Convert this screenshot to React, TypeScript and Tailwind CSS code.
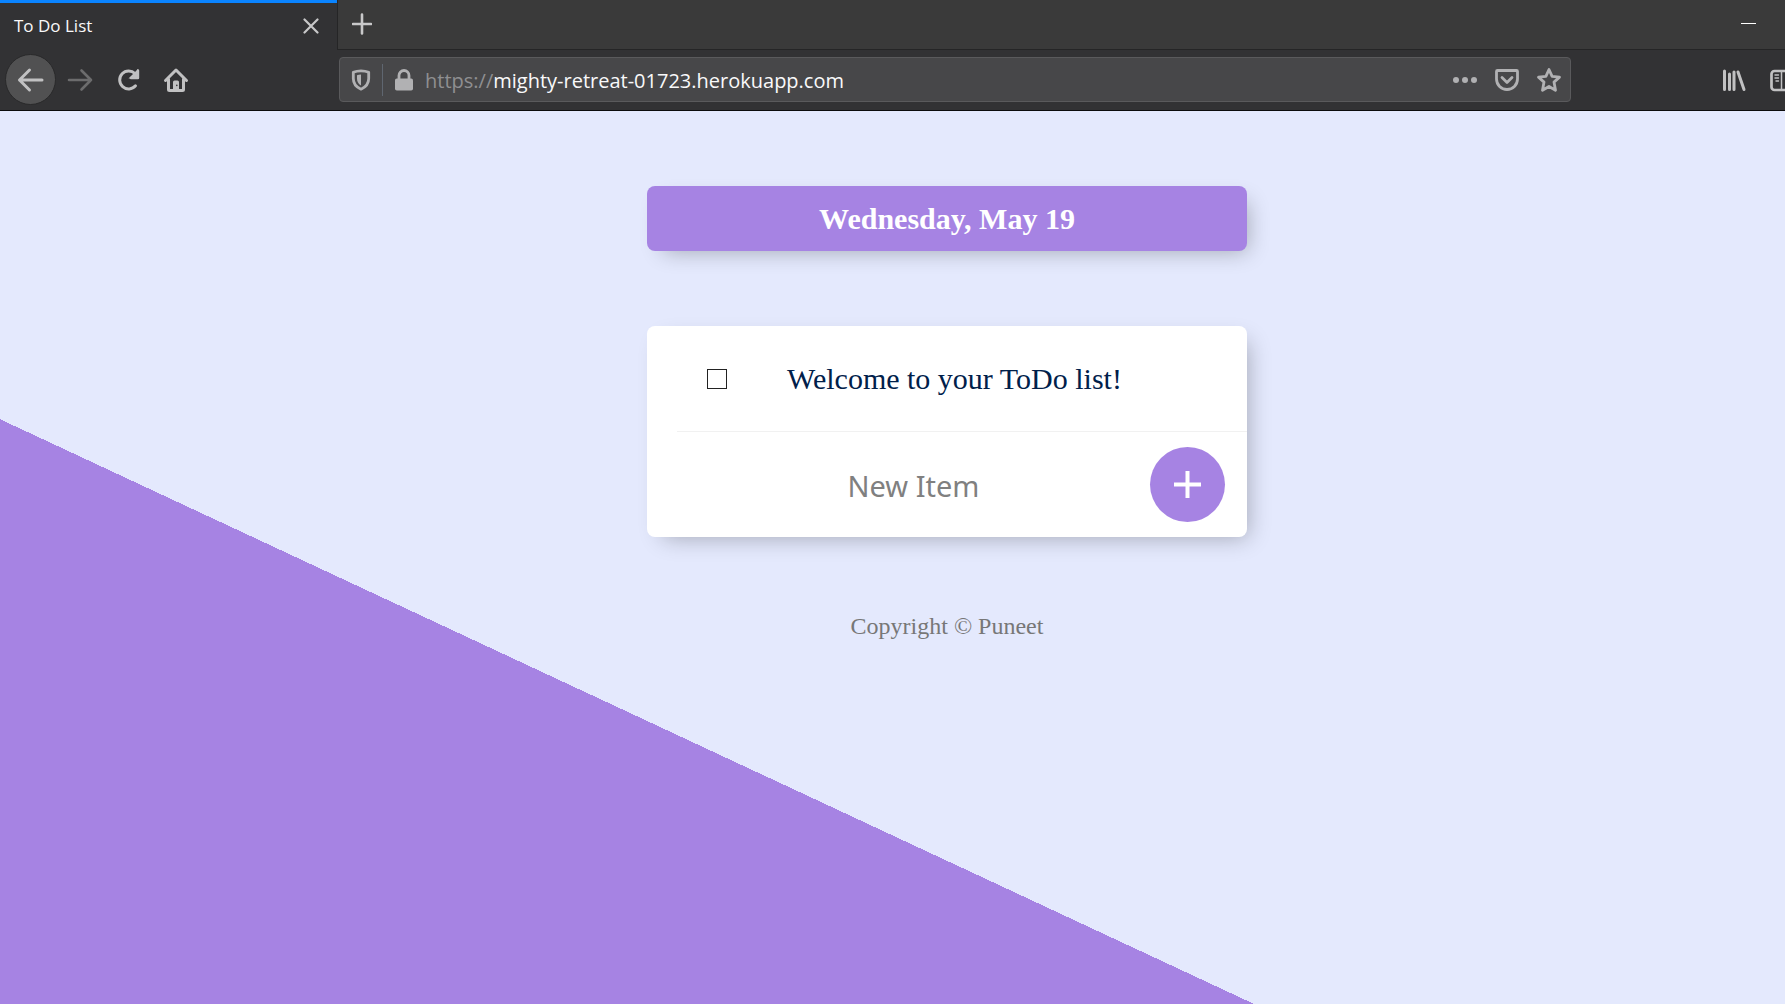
import React from "react";

function TabStrip() {
  return (
    <div className="flex h-[50px] items-stretch bg-[#3a3a3a]">
      <div className="flex w-[337px] shrink-0 items-center justify-between border-t-3 border-[#0a84ff] bg-[#323234] pr-3.5 pb-0.5 pl-3.5">
        <span className="text-[17px] leading-6 text-[#f9f9fa]">To Do List</span>
        <button aria-label="Close tab" className="flex size-6 items-center justify-center text-[#c8c8c9]">
          <svg width="16" height="16" viewBox="0 0 16 16" fill="none" stroke="currentColor" strokeWidth="2.2" strokeLinecap="round">
            <path d="M1.500 1.500l13 13M14.500 1.500l-13 13" />
          </svg>
        </button>
      </div>
      <div className="flex grow items-center justify-between border-b border-l border-[#252526] pr-[29px] pb-0.5 pl-3.5">
        <button aria-label="New tab" className="text-[#c8c8c9]">
          <svg width="20" height="22" viewBox="0 0 20 22" fill="none" stroke="currentColor" strokeWidth="2.6" strokeLinecap="round">
            <path d="M10 1.500v19M1 11h18" />
          </svg>
        </button>
        <button aria-label="Minimize" className="flex h-6 w-[15px] items-center">
          <span className="h-px w-full bg-white" />
        </button>
      </div>
    </div>
  );
}

function Toolbar() {
  return (
    <div className="flex h-[61px] items-center border-b border-[#0c0c0d] bg-[#323234] pb-px pl-[5px] text-[#c1c1c2]">
      <nav aria-label="Navigation" className="flex w-[334px] shrink-0 items-center">
        <button aria-label="Back" className="flex size-[51px] shrink-0 items-center justify-center rounded-full border border-[#29292a] bg-[#515152]">
          <svg width="28" height="28" viewBox="0 0 28 28" fill="none" stroke="currentColor" strokeWidth="3" strokeLinecap="round" strokeLinejoin="round">
            <path d="M25 14H2.500M12.500 4L2.500 14l10 10" />
          </svg>
        </button>
        <button aria-label="Forward" className="ml-2.5 text-[#6c6c6d]">
          <svg width="28" height="28" viewBox="0 0 28 28" fill="none" stroke="currentColor" strokeWidth="2.6" strokeLinecap="round" strokeLinejoin="round">
            <path d="M3 14h22M15.500 4.500L25 14l-9.500 9.500" />
          </svg>
        </button>
        <button aria-label="Reload" className="ml-5">
          <svg width="28" height="28" viewBox="0 0 28 28" fill="none" stroke="currentColor" strokeWidth="3" strokeLinecap="round">
            <path d="M21.500 19.800A9 9 0 1 1 21 7.500" />
            <path d="M24 3v9.500h-9.500z" fill="currentColor" stroke="none" />
            <path d="M24 4.500v7.500h-7" strokeWidth="2.4" strokeLinejoin="round" />
          </svg>
        </button>
        <button aria-label="Home" className="ml-5">
          <svg width="28" height="28" viewBox="0 0 28 28" fill="none" stroke="currentColor" strokeWidth="3" strokeLinecap="round" strokeLinejoin="round">
            <path d="M3.500 14.500L14 4l10.500 10.500M6.500 13v10.500q0 1 1 1h13q1 0 1-1V13" />
            <path d="M11 24.500V16q0-1.500 1.500-1.500h3Q17 14.500 17 16v8.500z" fill="currentColor" stroke="none" />
            <path d="M14.800 19.300v.2" stroke="#323234" strokeWidth="1.5" />
          </svg>
        </button>
      </nav>
      <div className="flex h-[45px] w-[1232px] min-w-0 items-center rounded-sm border border-[#5a5a5c] bg-[#474749] pr-[7px] pl-[9px] text-[#b1b1b3]">
        <button aria-label="Tracking protection">
          <svg width="24" height="24" viewBox="0 0 24 24" fill="none" stroke="currentColor" strokeWidth="2.8" strokeLinejoin="round">
            <path d="M12 2.800c3 0 5.500.5 7.700 1.400v6.300c0 5-2.700 8.500-7.700 10.700C7 19 4.300 15.500 4.300 10.500V4.200C6.500 3.300 9 2.800 12 2.800z" />
            <path d="M12 6.500v11c-2.700-1.500-4-4-4-7V7.300c1.200-.5 2.500-.8 4-.8z" fill="currentColor" stroke="none" />
          </svg>
        </button>
        <span className="ml-[9px] h-8 w-px bg-[#5f6670]" />
        <button aria-label="Site information" className="ml-[9px]">
          <svg width="24" height="24" viewBox="0 0 24 24" fill="none">
            <path d="M7 11V7.500a5 5 0 0 1 10 0V11" stroke="currentColor" strokeWidth="2.8" />
            <rect x="3" y="10.500" width="18" height="12" rx="1.800" fill="currentColor" />
          </svg>
        </button>
        <div className="ml-[9px] grow truncate pt-0.5 text-xl text-[#f9f9fa]">
          <span className="text-[#8f8f91]">https://</span>mighty-retreat-01723.herokuapp.com
        </div>
        <div className="flex items-center gap-3.5">
          <button aria-label="Page actions">
            <svg width="28" height="28" viewBox="0 0 28 28" fill="currentColor">
              <circle cx="5" cy="14" r="3" />
              <circle cx="14" cy="14" r="3" />
              <circle cx="23" cy="14" r="3" />
            </svg>
          </button>
          <button aria-label="Save to Pocket">
            <svg width="28" height="28" viewBox="0 0 28 28" fill="none" stroke="currentColor" strokeWidth="2.8" strokeLinecap="round" strokeLinejoin="round">
              <path d="M4.500 4.500h19q1 0 1 1v7.500a10.500 10.500 0 0 1-21 0V5.500q0-1 1-1z" />
              <path d="M9 11.500l5 5 5-5" />
            </svg>
          </button>
          <button aria-label="Bookmark this page">
            <svg width="28" height="28" viewBox="0 0 28 28" fill="none" stroke="currentColor" strokeWidth="2.8" strokeLinejoin="round">
              <path d="M14 3.500l3.100 6.800 7.400.8-5.500 5 1.500 8.200-6.500-3.800-6.500 3.800L9 16.100l-5.500-5 7.400-.8z" />
            </svg>
          </button>
        </div>
      </div>
      <div className="ml-auto flex w-[65px] shrink-0 items-center gap-5 overflow-hidden">
        <button aria-label="Library" className="shrink-0">
          <svg width="28" height="28" viewBox="0 0 28 28" fill="none" stroke="currentColor" strokeWidth="3" strokeLinecap="round">
            <path d="M4.500 5v18.500M9.500 8v15.500M14 6v17.500M18 6l6 17.500" />
          </svg>
        </button>
        <button aria-label="Sidebars" className="shrink-0">
          <svg width="28" height="28" viewBox="0 0 28 28" fill="none" stroke="currentColor" strokeWidth="2.7" strokeLinecap="round">
            <rect x="3.500" y="5" width="22" height="19" rx="3" />
            <path d="M13.500 5v19" strokeWidth="1.5" />
            <path d="M7 9h3.500M7 12h3.500M8 15h2.500" strokeWidth="1.4" />
          </svg>
        </button>
      </div>
    </div>
  );
}

export default function App() {
  return (
    <div className="flex min-h-screen flex-col font-['Open_Sans','Noto_Sans',sans-serif]">
      <header>
        <TabStrip />
        <Toolbar />
      </header>
      <main className="flex grow flex-col items-center bg-[linear-gradient(25deg,#a683e3_530px,#e4e9fd_530px)] pt-[75px] pl-[109px] font-['Liberation_Serif',serif]">
        <div className="w-full max-w-[600px] rounded-lg bg-[#a683e3] py-2.5 text-center shadow-[8px_8px_22px_-8px_rgba(0,0,0,0.3)]">
          <h1 className="text-[30px] leading-[45px] font-bold text-white">Wednesday, May 19</h1>
        </div>
        <form className="mt-[75px] w-full max-w-[600px] rounded-lg bg-white shadow-[8px_8px_22px_-8px_rgba(0,0,0,0.3)]" onSubmit={(e) => e.preventDefault()}>
          <div className="ml-[30px] flex h-[106px] items-center border-b border-[#f1f1f1] pl-[30px]">
            <input id="welcome" type="checkbox" className="size-5 appearance-none border border-[#222] bg-white" />
            <label htmlFor="welcome" className="ml-[60px] text-[30px] text-[#00204a]">
              Welcome to your ToDo list!
            </label>
          </div>
          <div className="flex h-[105px] items-center pr-[22px] pl-[30px]">
            <input
              type="text"
              aria-label="New Item"
              placeholder="New Item"
              autoComplete="off"
              className="h-[90px] min-w-0 grow bg-transparent pt-0.5 text-center font-['Noto_Sans',sans-serif] text-[29px] text-[#00204a] outline-none placeholder:text-[#808080]"
            />
            <button type="submit" aria-label="Add item" className="flex size-[75px] shrink-0 items-center justify-center rounded-full bg-[#a683e3] text-white">
              <svg width="27" height="27" viewBox="0 0 27 27" stroke="currentColor" strokeWidth="4">
                <path d="M13.500 0v27M0 13.500h27" />
              </svg>
            </button>
          </div>
        </form>
        <footer className="mt-[73px] text-2xl text-[#777777]">Copyright © Puneet</footer>
      </main>
    </div>
  );
}
